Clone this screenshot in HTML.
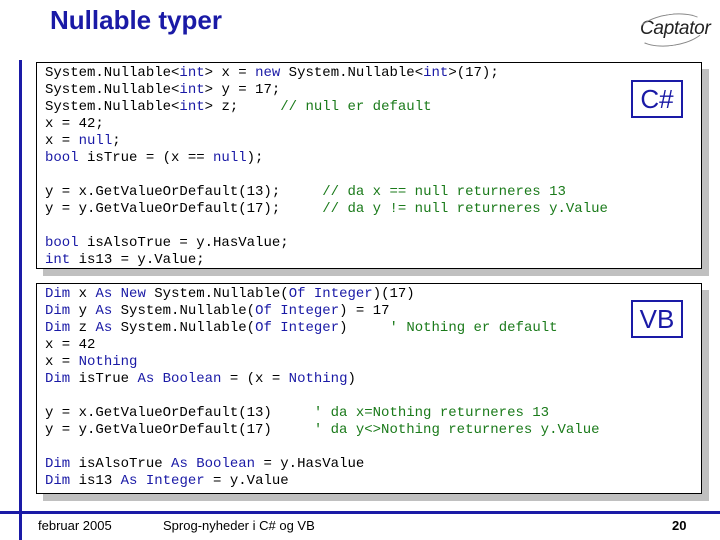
<!DOCTYPE html>
<html><head><style>
body{margin:0;width:720px;height:540px;background:#fff;position:relative;overflow:hidden;font-family:"Liberation Sans",sans-serif}
.t{position:absolute;left:50px;top:5px;font-size:26px;font-weight:bold;color:#1a1aa6}
.logo{position:absolute;left:640px;top:18px;font-size:19px;font-style:italic;color:#222;letter-spacing:-0.3px}
.logo:before{content:"";position:absolute;left:-4px;top:-4px;width:68px;height:30px;border:1.5px solid #888;border-radius:50%;border-color:#888 transparent #888 transparent;transform:rotate(-8deg)}
.vl{position:absolute;left:19px;top:60px;width:3px;height:480px;background:#1a1aa6}
.hl{position:absolute;left:0;top:511px;width:720px;height:3px;background:#1a1aa6}
.box{position:absolute;left:36px;width:664px;background:#fff;border:1px solid #000;box-shadow:7px 7px 0 #c0c0c0}
pre{margin:0;position:absolute;left:8px;font-family:"Liberation Mono",monospace;font-size:14px;line-height:17px;color:#000}
.k{color:#1a1aa6}.c{color:#1a7a1a}
.lab{position:absolute;border:2px solid #1a1aa6;color:#1a1aa6;font-size:26px;text-align:center;line-height:34px}
.f{position:absolute;top:518px;font-size:13px;color:#000}
</style></head><body>
<div class="t">Nullable typer</div>
<div class="logo">Captator</div>
<div class="vl"></div>
<div class="box" style="top:62px;height:205px">
<pre style="top:2px">System.Nullable&lt;<span class="k">int</span>&gt; x = <span class="k">new</span> System.Nullable&lt;<span class="k">int</span>&gt;(17);
System.Nullable&lt;<span class="k">int</span>&gt; y = 17;
System.Nullable&lt;<span class="k">int</span>&gt; z;     <span class="c">// null er default</span>
x = 42;
x = <span class="k">null</span>;
<span class="k">bool</span> isTrue = (x == <span class="k">null</span>);

y = x.GetValueOrDefault(13);     <span class="c">// da x == null returneres 13</span>
y = y.GetValueOrDefault(17);     <span class="c">// da y != null returneres y.Value</span>

<span class="k">bool</span> isAlsoTrue = y.HasValue;
<span class="k">int</span> is13 = y.Value;</pre>
<div class="lab" style="left:594px;top:17px;width:48px;height:34px">C#</div>
</div>
<div class="box" style="top:283px;height:209px">
<pre style="top:2px"><span class="k">Dim</span> x <span class="k">As New</span> System.Nullable(<span class="k">Of Integer</span>)(17)
<span class="k">Dim</span> y <span class="k">As</span> System.Nullable(<span class="k">Of Integer</span>) = 17
<span class="k">Dim</span> z <span class="k">As</span> System.Nullable(<span class="k">Of Integer</span>)     <span class="c">' Nothing er default</span>
x = 42
x = <span class="k">Nothing</span>
<span class="k">Dim</span> isTrue <span class="k">As Boolean</span> = (x = <span class="k">Nothing</span>)

y = x.GetValueOrDefault(13)     <span class="c">' da x=Nothing returneres 13</span>
y = y.GetValueOrDefault(17)     <span class="c">' da y&lt;&gt;Nothing returneres y.Value</span>

<span class="k">Dim</span> isAlsoTrue <span class="k">As Boolean</span> = y.HasValue
<span class="k">Dim</span> is13 <span class="k">As Integer</span> = y.Value</pre>
<div class="lab" style="left:594px;top:16px;width:48px;height:34px">VB</div>
</div>
<div class="hl"></div>
<div class="f" style="left:38px">februar 2005</div>
<div class="f" style="left:163px">Sprog-nyheder i C# og VB</div>
<div class="f" style="left:672px;font-weight:bold">20</div>
</body></html>
